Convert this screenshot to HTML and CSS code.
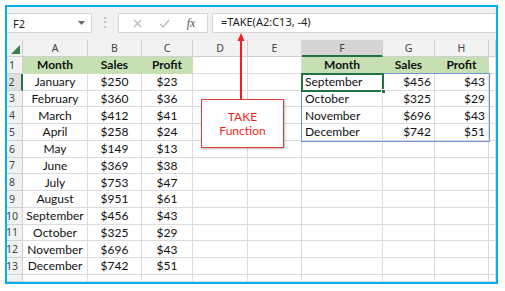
FILE: index.html
```html
<!DOCTYPE html>
<html lang="en">
<head>
  <meta charset="UTF-8" />
  <title>TAKE Function</title>
  <link rel="stylesheet" href="styles.css">
</head>
<body>

<div class="frame">
  <div class="toolbar">
    <div class="namebox">
      <span>F2</span>
      <svg class="caret" width="7" height="4" viewBox="0 0 7 4"><polygon points="0,0 7,0 3.5,4" fill="#666"/></svg>
    </div>
    <div class="grip">⋮</div>
    <div class="fxbox">
      <svg width="9" height="9" viewBox="0 0 9 9"><path d="M1 1 L8 8 M8 1 L1 8" stroke="#b8b8b8" stroke-width="1.2" fill="none"/></svg>
      <svg width="11" height="9" viewBox="0 0 11 9"><path d="M1 5 L4 8 L10 1" stroke="#b8b8b8" stroke-width="1.2" fill="none"/></svg>
      <span class="fx">fx</span>
    </div>
    <div class="formula">=TAKE(A2:C13, -4)</div>
  </div>

  <div class="sheet">
    <div class="row">
      <div class="ch corner"><svg width="9" height="9" viewBox="0 0 9 9"><polygon points="9,0 9,9 0,9" fill="#3f7f52"/></svg></div>
      <div class="ch">A</div><div class="ch">B</div><div class="ch">C</div><div class="ch">D</div><div class="ch">E</div>
      <div class="ch active">F</div><div class="ch">G</div><div class="ch">H</div><div class="ch"></div>
    </div>
    <div class="row">
      <div class="rh">1</div>
      <div class="hd">Month</div><div class="hd">Sales</div><div class="hd">Profit</div><div></div><div></div>
      <div class="hd">Month</div><div class="hd">Sales</div><div class="hd">Profit</div><div></div>
    </div>
    <div class="row">
      <div class="rh active">2</div>
      <div class="c">January</div><div class="c">$250</div><div class="c">$23</div><div></div><div></div>
      <div class="l">September</div><div class="r">$456</div><div class="r">$43</div><div></div>
    </div>
    <div class="row">
      <div class="rh">3</div>
      <div class="c">February</div><div class="c">$360</div><div class="c">$36</div><div></div><div></div>
      <div class="l">October</div><div class="r">$325</div><div class="r">$29</div><div></div>
    </div>
    <div class="row">
      <div class="rh">4</div>
      <div class="c">March</div><div class="c">$412</div><div class="c">$41</div><div></div><div></div>
      <div class="l">November</div><div class="r">$696</div><div class="r">$43</div><div></div>
    </div>
    <div class="row">
      <div class="rh">5</div>
      <div class="c">April</div><div class="c">$258</div><div class="c">$24</div><div></div><div></div>
      <div class="l">December</div><div class="r">$742</div><div class="r">$51</div><div></div>
    </div>
    <div class="row">
      <div class="rh">6</div>
      <div class="c">May</div><div class="c">$149</div><div class="c">$13</div><div></div><div></div>
      <div></div><div></div><div></div><div></div>
    </div>
    <div class="row">
      <div class="rh">7</div>
      <div class="c">June</div><div class="c">$369</div><div class="c">$38</div><div></div><div></div>
      <div></div><div></div><div></div><div></div>
    </div>
    <div class="row">
      <div class="rh">8</div>
      <div class="c">July</div><div class="c">$753</div><div class="c">$47</div><div></div><div></div>
      <div></div><div></div><div></div><div></div>
    </div>
    <div class="row">
      <div class="rh">9</div>
      <div class="c">August</div><div class="c">$951</div><div class="c">$61</div><div></div><div></div>
      <div></div><div></div><div></div><div></div>
    </div>
    <div class="row">
      <div class="rh">10</div>
      <div class="c">September</div><div class="c">$456</div><div class="c">$43</div><div></div><div></div>
      <div></div><div></div><div></div><div></div>
    </div>
    <div class="row">
      <div class="rh">11</div>
      <div class="c">October</div><div class="c">$325</div><div class="c">$29</div><div></div><div></div>
      <div></div><div></div><div></div><div></div>
    </div>
    <div class="row">
      <div class="rh">12</div>
      <div class="c">November</div><div class="c">$696</div><div class="c">$43</div><div></div><div></div>
      <div></div><div></div><div></div><div></div>
    </div>
    <div class="row">
      <div class="rh">13</div>
      <div class="c">December</div><div class="c">$742</div><div class="c">$51</div><div></div><div></div>
      <div></div><div></div><div></div><div></div>
    </div>
    <div class="row">
      <div class="rh"></div>
      <div></div><div></div><div></div><div></div><div></div>
      <div></div><div></div><div></div><div></div>
    </div>

    <div class="spill"></div>
    <div class="sel"><span class="handle"></span></div>
  </div>

  <svg class="arrow" width="10" height="68" viewBox="0 0 10 68">
    <line x1="5" y1="6" x2="5" y2="68" stroke="#f01e1e" stroke-width="2"/>
    <polygon points="5,0 1.5,8 8.5,8" fill="#f01e1e"/>
  </svg>
  <div class="callout">TAKE<br>Function</div>
</div>

</body>
</html>
```

FILE: styles.css
```css
* { box-sizing: border-box; }

body {
  margin: 0;
  padding: 5px;
  background: #fff;
  font-family: Lato, "Liberation Sans", sans-serif;
}

.frame {
  position: relative;
  width: 493px;
  height: 279px;
  border: 2px solid #00b0f0;
  background: #fff;
  overflow: hidden;
}

/* formula bar */
.toolbar {
  display: flex;
  align-items: flex-start;
  height: 33px;
  padding-top: 6px;
  background: #f1f1f1;
}

.namebox {
  display: flex;
  align-items: center;
  justify-content: space-between;
  width: 85px;
  height: 20px;
  padding: 0 6px 0 6px;
  background: #fff;
  border: 1px solid #d6d6d6;
  border-left: none;
  font: 11px "Noto Sans", sans-serif;
  color: #222;
}

.grip {
  width: 26px;
  height: 20px;
  line-height: 20px;
  text-align: center;
  color: #b0b0b0;
  font: 12px "Noto Sans", sans-serif;
}

.fxbox {
  display: flex;
  align-items: center;
  justify-content: space-around;
  width: 90px;
  height: 20px;
  padding: 0 3px 0 5px;
  background: #fff;
  border: 1px solid #d6d6d6;
}

.fx {
  font: italic 12px "Liberation Serif", serif;
  color: #555;
}

.formula {
  flex: 1;
  height: 20px;
  margin-left: 4px;
  padding-left: 8px;
  line-height: 18px;
  background: #fff;
  border: 1px solid #d6d6d6;
  border-right: none;
  font: 11px "Noto Sans", sans-serif;
  color: #222;
}

/* grid */
.sheet {
  position: relative;
  display: grid;
  grid-template-columns: 16px 65px 54px 51px 55px 54px 81px 52px 54px 1fr;
  grid-template-rows: 17px repeat(13, 16.75px) 1fr;
  height: 242px;
}

.row { display: contents; }

.row > div {
  display: flex;
  align-items: center;
  overflow: hidden;
  white-space: nowrap;
  border-right: 1px solid #dcdcdc;
  border-bottom: 1px solid #dcdcdc;
  font-size: 12px;
  color: #111;
}

.row > .ch {
  justify-content: center;
  background: #f2f2f2;
  border-color: #d0d0d0;
  font: 10.5px "Noto Sans", sans-serif;
  color: #444;
}

.row > .ch.active {
  background: #d5d5d5;
  border-bottom: 2px solid #217346;
}

.row > .corner {
  align-items: flex-end;
  justify-content: flex-end;
  padding: 0 2px 2px 0;
}

.row > .rh {
  justify-content: center;
  padding-right: 5px;
  overflow: visible;
  background: #f2f2f2;
  border-color: #d0d0d0;
  font: 10.5px "Noto Sans", sans-serif;
  color: #444;
}

.row > .rh.active {
  background: #e1e1e1;
  border-right: 2px solid #217346;
}

.row > .hd {
  justify-content: center;
  background: #c6e0b4;
  border-color: #c6e0b4;
  font-weight: bold;
}

.row > .c { justify-content: center; }
.row > .l { padding-left: 3px; }
.row > .r { justify-content: flex-end; padding-right: 3px; }

.spill {
  position: absolute;
  left: 294px;
  top: 33px;
  width: 189px;
  height: 69px;
  border: 1px solid #7196d4;
}

.sel {
  position: absolute;
  left: 294px;
  top: 33px;
  width: 83px;
  height: 19px;
  border: 2px solid #217346;
}

.handle {
  position: absolute;
  right: -4px;
  bottom: -4px;
  width: 5px;
  height: 5px;
  background: #217346;
  border: 1px solid #fff;
}

/* annotation */
.arrow {
  position: absolute;
  left: 229px;
  top: 26px;
}

.callout {
  position: absolute;
  left: 194px;
  top: 92px;
  width: 83px;
  height: 49px;
  display: flex;
  align-items: center;
  justify-content: center;
  text-align: center;
  line-height: 14px;
  background: #fff;
  border: 1px solid #e53935;
  box-shadow: 1px 1px 2px rgba(0, 0, 0, 0.25);
  font-size: 12px;
  color: #f01e1e;
}
```
